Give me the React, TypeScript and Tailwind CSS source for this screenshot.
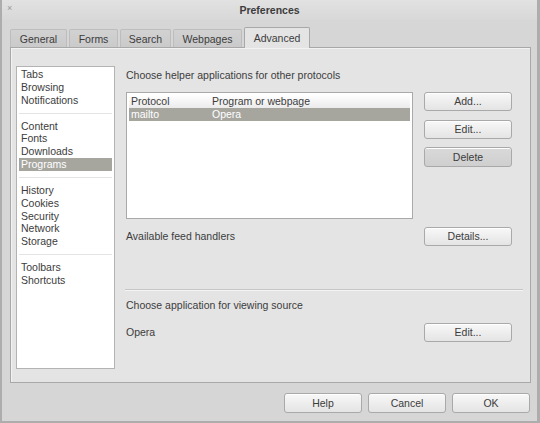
import React from 'react';

const TABS = [
    { label: 'General', w: 'w-[57px]' },
    { label: 'Forms', w: 'w-[49px]' },
    { label: 'Search', w: 'w-[51px]' },
    { label: 'Webpages', w: 'w-[69px]' },
];

const GROUPS = [
    ['Tabs', 'Browsing', 'Notifications'],
    ['Content', 'Fonts', 'Downloads', 'Programs'],
    ['History', 'Cookies', 'Security', 'Network', 'Storage'],
    ['Toolbars', 'Shortcuts'],
];

function Button({ label, pressed, className = '' }: { label: string; pressed?: boolean; className?: string }) {
    return (
        <div
            className={`flex items-center justify-center rounded-[3px] border border-[#a9a9a9] shadow-[inset_0_1px_0_#ffffff] ${pressed
                ? 'bg-gradient-to-b from-[#d9d9d9] to-[#cfcfcf]'
                : 'bg-gradient-to-b from-[#f8f8f8] to-[#e4e4e4]'
                } ${className}`}
        >
            {label}
        </div>
    );
}

export default function App() {
    return (
        <div className="w-[540px] h-[423px] flex flex-col bg-[#d6d6d6] border-l-2 border-r-[3px] border-b-2 border-[#adadad] font-['Liberation_Sans',Arial,sans-serif] text-[10.5px] text-[#3c3c3c] leading-none">
            {/* Title bar */}
            <div className="relative h-[20px] flex items-center justify-center bg-gradient-to-b from-[#e2e2e2] to-[#d8d8d8]">
                <span className="absolute left-[5px] top-[4px] text-[9px] text-[#9a9a9a]">×</span>
                <span className="font-bold">Preferences</span>
            </div>

            {/* Tabs */}
            <div className="mt-[7px] ml-[8px] h-[20px] flex items-end gap-[2px]">
                {TABS.map((t) => (
                    <div
                        key={t.label}
                        className={`${t.w} h-[18px] flex items-center justify-center rounded-t-[2px] border border-b-0 border-[#bdbdbd] bg-gradient-to-b from-[#d2d2d2] to-[#cacaca] pt-[2px]`}
                    >
                        {t.label}
                    </div>
                ))}
                <div className="relative z-10 w-[66px] h-[21px] -mb-px flex items-center justify-center rounded-t-[2px] border border-b-0 border-[#a8a8a8] bg-[#e4e4e4]">
                    Advanced
                </div>
            </div>

            {/* Panel */}
            <div className="ml-[8px] w-[521px] h-[336px] flex border border-[#a8a8a8] bg-[#e4e4e4] shadow-[inset_1px_1px_0_#f2f2f2]">
                {/* Category list */}
                <div className="ml-[5px] mt-[18px] w-[99px] h-[303px] border border-[#b3b3b3] bg-white px-[2px] pt-[1px]">
                    {GROUPS.map((g, gi) => (
                        <div key={gi}>
                            {gi > 0 && (
                                <div className="h-[12.86px] flex items-center">
                                    <div className="w-full h-px bg-[#e3e3e3]" />
                                </div>
                            )}
                            {g.map((item) => (
                                <div
                                    key={item}
                                    className={`h-[12.86px] flex items-center px-[2px] ${item === 'Programs' ? 'bg-[#a6a69f] text-white' : ''}`}
                                >
                                    {item}
                                </div>
                            ))}
                        </div>
                    ))}
                </div>

                {/* Programs page */}
                <div className="ml-[10px] mt-[21px] w-[398px] flex flex-col pl-px">
                    <div className="h-[13px] flex items-center">Choose helper applications for other protocols</div>

                    <div className="mt-[10px] flex w-[386px]">
                        <div className="w-[287px] h-[127px] border border-[#a9a9a9] bg-white p-[2px]">
                            <div className="h-[13px] flex items-center bg-gradient-to-b from-white to-[#ebebeb]">
                                <span className="w-[83px] pl-[2px]">Protocol</span>
                                <span>Program or webpage</span>
                            </div>
                            <div className="h-[13px] flex items-center bg-[#a6a69f] text-white">
                                <span className="w-[83px] pl-[2px]">mailto</span>
                                <span>Opera</span>
                            </div>
                        </div>
                        <div className="ml-[11px] w-[88px] flex flex-col">
                            <Button label="Add..." className="h-[19px]" />
                            <Button label="Edit..." className="h-[19px] mt-[9px]" />
                            <Button label="Delete" pressed className="h-[20px] mt-[8px]" />
                        </div>
                    </div>

                    <div className="mt-[8px] w-[386px] h-[19px] flex items-center justify-between">
                        <span>Available feed handlers</span>
                        <Button label="Details..." className="w-[88px] h-[19px]" />
                    </div>

                    <div className="mt-[43px] -ml-px h-px bg-[#c6c6c6] shadow-[0_1px_0_#f4f4f4]" />

                    <div className="mt-[9px] h-[13px] flex items-center">Choose application for viewing source</div>

                    <div className="mt-[11px] w-[386px] h-[19px] flex items-center justify-between">
                        <span>Opera</span>
                        <Button label="Edit..." className="w-[88px] h-[19px]" />
                    </div>
                </div>
            </div>

            {/* Dialog buttons */}
            <div className="mt-[10px] mr-[7px] flex justify-end gap-[6px]">
                <Button label="Help" className="w-[78px] h-[20px]" />
                <Button label="Cancel" className="w-[78px] h-[20px]" />
                <Button label="OK" className="w-[78px] h-[20px]" />
            </div>
        </div>
    );
}
